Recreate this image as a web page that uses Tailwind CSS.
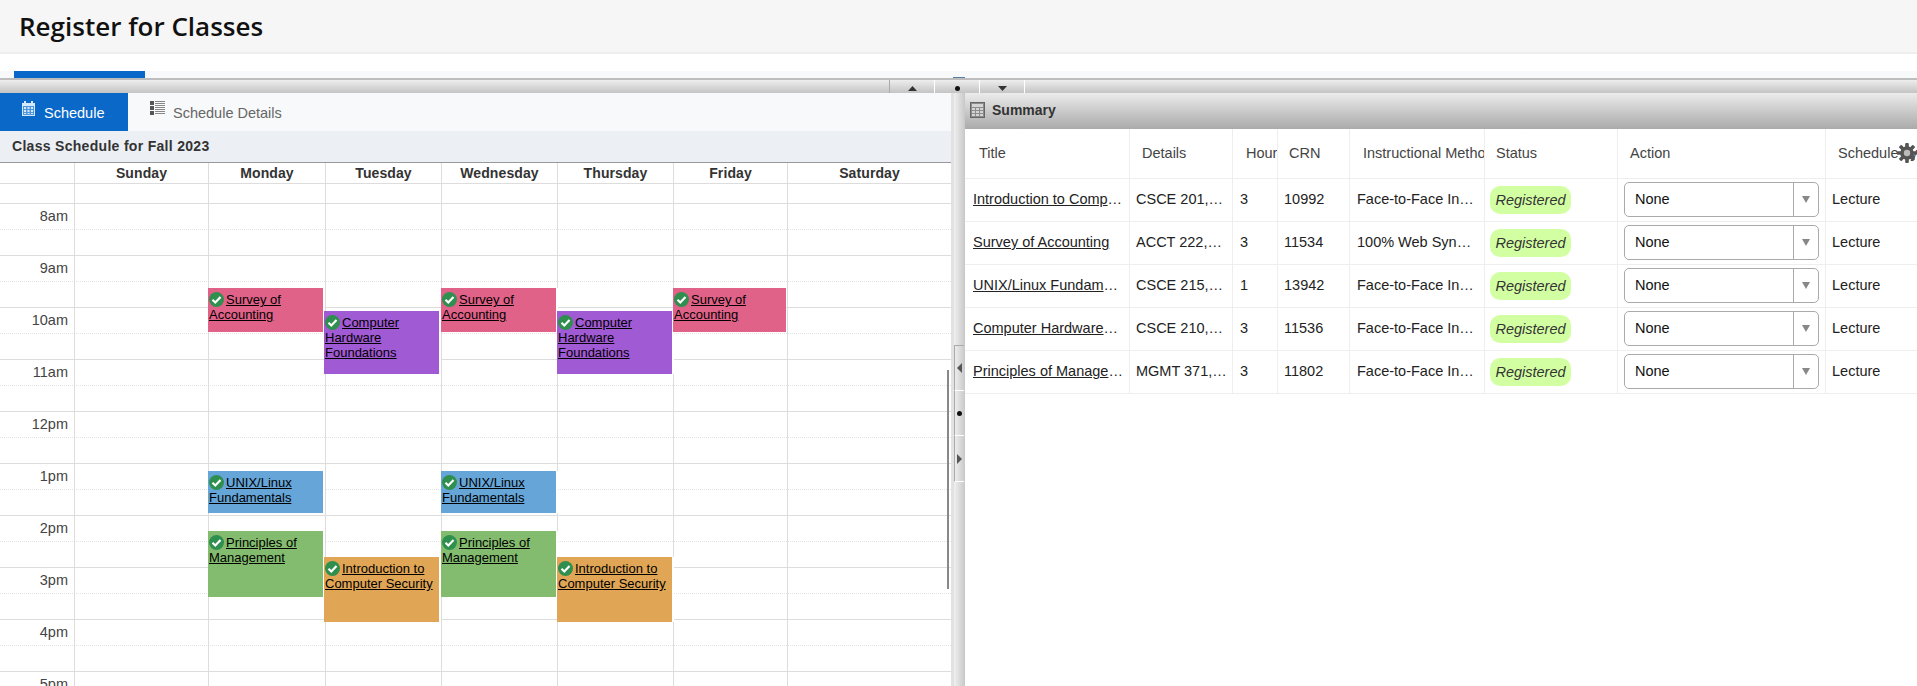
<!DOCTYPE html>
<html lang="en">
<head>
<meta charset="utf-8">
<title>Register for Classes</title>
<script src="https://cdn.jsdelivr.net/npm/@tailwindcss/browser@4"></script>
</head>
<body class="h-[686px] overflow-hidden bg-white font-['Liberation_Sans',Arial,sans-serif] text-[#333]">
<header class="h-[54px] bg-[#f6f6f6] border-b-2 border-[#eeeeee] pl-[19px] flex items-center">
  <h1 class="font-['Open_Sans',sans-serif] font-semibold text-[26px] text-[#111]">Register for Classes</h1>
</header>
<div class="h-[17px] bg-white"></div>
<div class="h-[7px] bg-[#f8f9fb] pl-[14px]"><div class="w-[131px] h-full bg-[#0a68c8]"></div></div>

<div class="relative h-[15px] border-t-2 border-[#bdbdbd] bg-linear-to-b from-[#eeeeee] to-[#c4c4c4] flex pl-[889px]">
  <div class="absolute left-[953px] top-[-3px] w-[12px] h-[1px] bg-[#5b7ea6]"></div>
  <div class="w-[46px] h-[13px] border-l border-l-[#aaaaaa] border-r border-r-white flex items-center justify-center pt-[3px]">
    <svg width="9" height="5" viewBox="0 0 9 5"><path d="M4.500 0L9 5H0z" fill="#333"/></svg>
  </div>
  <div class="w-[45px] h-[13px] border-r border-r-white flex items-center justify-center pt-[3px]">
    <div class="w-[5px] h-[5px] rounded-full bg-[#111]"></div>
  </div>
  <div class="w-[45px] h-[13px] border-r border-r-white flex items-center justify-center pt-[3px]">
    <svg width="9" height="5" viewBox="0 0 9 5"><path d="M0 0H9L4.500 5z" fill="#333"/></svg>
  </div>
</div>

<main class="flex h-[593px]">
  <!-- Left: calendar -->
  <section class="w-[951px] shrink-0 flex flex-col">
    <nav class="h-[38px] bg-[#f8f9fb] flex text-[14.5px] shrink-0">
      <div class="w-[128px] bg-[#0a68c8] text-white flex pl-[22px] gap-[9px]">
        <svg class="mt-[8px]" width="13" height="15" viewBox="0 0 13 15"><path d="M2 0h2v2h5V0h2v2h2v13H0V2h2z" fill="#d6e8fb"/><path d="M1 5h11v9H1z" fill="#4f97dc"/><path d="M2 6h2v2H2zM5.500 6h2v2h-2zM9 6h2v2H9zM2 9h2v2H2zM5.500 9h2v2h-2zM9 9h2v2H9zM2 12h2v1H2zM5.500 12h2v1h-2zM9 12h2v1H9z" fill="#d6e8fb"/></svg>
        <span class="pt-[12px] leading-[17px]">Schedule</span>
      </div>
      <div class="flex pl-[22px] gap-[8px] text-[#666]">
        <svg class="mt-[8px]" width="15" height="14" viewBox="0 0 15 14"><path d="M0 0h4v4H0zM0 5h4v4H0zM0 10h4v4H0z" fill="#555"/><path d="M5 0h10v1H5zM5 2h10v1H5zM5 4h10v1H5zM5 6h10v1H5zM5 8h10v1H5zM5 10h10v1H5zM5 12h10v1H5z" fill="#888"/></svg>
        <span class="pt-[12px] leading-[17px]">Schedule Details</span>
      </div>
    </nav>
    <div class="h-[32px] shrink-0 bg-[#eceff4] border-b border-[#999999] pl-[12px] pt-[6px] text-[14px] font-bold tracking-[0.3px] leading-[18px]">Class Schedule for Fall 2023</div>

    <div class="relative flex-1 overflow-hidden">
      <!-- horizontal rows -->
      <div class="h-[21px] border-b border-[#dddddd]"></div>
      <div class="h-[20px] border-b border-[#dddddd]"></div>
      <div class="h-[52px] border-b border-[#dddddd]"><div class="h-[26px] border-b border-dotted border-[#e4e4e4] w-full"><div class="w-[68px] text-right text-[14.5px] leading-[24px] text-[#444]">8am</div></div></div>
      <div class="h-[52px] border-b border-[#dddddd]"><div class="h-[26px] border-b border-dotted border-[#e4e4e4] w-full"><div class="w-[68px] text-right text-[14.5px] leading-[24px] text-[#444]">9am</div></div></div>
      <div class="h-[52px] border-b border-[#dddddd]"><div class="h-[26px] border-b border-dotted border-[#e4e4e4] w-full"><div class="w-[68px] text-right text-[14.5px] leading-[24px] text-[#444]">10am</div></div></div>
      <div class="h-[52px] border-b border-[#dddddd]"><div class="h-[26px] border-b border-dotted border-[#e4e4e4] w-full"><div class="w-[68px] text-right text-[14.5px] leading-[24px] text-[#444]">11am</div></div></div>
      <div class="h-[52px] border-b border-[#dddddd]"><div class="h-[26px] border-b border-dotted border-[#e4e4e4] w-full"><div class="w-[68px] text-right text-[14.5px] leading-[24px] text-[#444]">12pm</div></div></div>
      <div class="h-[52px] border-b border-[#dddddd]"><div class="h-[26px] border-b border-dotted border-[#e4e4e4] w-full"><div class="w-[68px] text-right text-[14.5px] leading-[24px] text-[#444]">1pm</div></div></div>
      <div class="h-[52px] border-b border-[#dddddd]"><div class="h-[26px] border-b border-dotted border-[#e4e4e4] w-full"><div class="w-[68px] text-right text-[14.5px] leading-[24px] text-[#444]">2pm</div></div></div>
      <div class="h-[52px] border-b border-[#dddddd]"><div class="h-[26px] border-b border-dotted border-[#e4e4e4] w-full"><div class="w-[68px] text-right text-[14.5px] leading-[24px] text-[#444]">3pm</div></div></div>
      <div class="h-[52px] border-b border-[#dddddd]"><div class="h-[26px] border-b border-dotted border-[#e4e4e4] w-full"><div class="w-[68px] text-right text-[14.5px] leading-[24px] text-[#444]">4pm</div></div></div>
      <div class="h-[52px] border-b border-[#dddddd]"><div class="h-[26px] border-b border-dotted border-[#e4e4e4] w-full"><div class="w-[68px] text-right text-[14.5px] leading-[24px] text-[#444]">5pm</div></div></div>

      <!-- day columns over the rows -->
      <div class="absolute inset-0 grid grid-cols-[75px_134px_117px_116px_116px_116px_114px_163px] text-[14px] font-bold leading-[21px] tracking-[0.1px] text-center text-[#333]">
        <div class="border-r border-[#dddddd]"></div>
        <div class="border-r border-[#dddddd]">Sunday</div>
        <div class="relative border-r border-[#dddddd]">Monday
          <div class="absolute left-[-1px] top-[125px] w-[117px] h-[44px] border-r-2 border-white bg-[#e06288] pt-[4px] pl-[1px] text-left font-normal tracking-normal text-[13px] leading-[15px] text-black"><svg class="inline-block align-[-3px] mr-[2px]" width="15" height="15" viewBox="0 0 15 15"><circle cx="7.500" cy="7.500" r="7.500" fill="#2f8f4e"/><path d="M3.500 7.800l2.800 2.700 5.200-5.500" fill="none" stroke="#fff" stroke-width="2.200"/></svg><a class="underline" href="#">Survey of Accounting</a></div>
          <div class="absolute left-[-1px] top-[308px] w-[117px] h-[42px] border-r-2 border-white bg-[#66a5d8] pt-[4px] pl-[1px] text-left font-normal tracking-normal text-[13px] leading-[15px] text-black"><svg class="inline-block align-[-3px] mr-[2px]" width="15" height="15" viewBox="0 0 15 15"><circle cx="7.500" cy="7.500" r="7.500" fill="#2f8f4e"/><path d="M3.500 7.800l2.800 2.700 5.200-5.500" fill="none" stroke="#fff" stroke-width="2.200"/></svg><a class="underline" href="#">UNIX/Linux Fundamentals</a></div>
          <div class="absolute left-[-1px] top-[368px] w-[117px] h-[66px] border-r-2 border-white bg-[#83bc6e] pt-[4px] pl-[1px] text-left font-normal tracking-normal text-[13px] leading-[15px] text-black"><svg class="inline-block align-[-3px] mr-[2px]" width="15" height="15" viewBox="0 0 15 15"><circle cx="7.500" cy="7.500" r="7.500" fill="#2f8f4e"/><path d="M3.500 7.800l2.800 2.700 5.200-5.500" fill="none" stroke="#fff" stroke-width="2.200"/></svg><a class="underline" href="#">Principles of Management</a></div>
        </div>
        <div class="relative border-r border-[#dddddd]">Tuesday
          <div class="absolute left-[-2px] top-[148px] w-[117px] h-[63px] border-r-2 border-white bg-[#a05ad4] pt-[4px] pl-[1px] text-left font-normal tracking-normal text-[13px] leading-[15px] text-black"><svg class="inline-block align-[-3px] mr-[2px]" width="15" height="15" viewBox="0 0 15 15"><circle cx="7.500" cy="7.500" r="7.500" fill="#2f8f4e"/><path d="M3.500 7.800l2.800 2.700 5.200-5.500" fill="none" stroke="#fff" stroke-width="2.200"/></svg><a class="underline" href="#">Computer Hardware Foundations</a></div>
          <div class="absolute left-[-2px] top-[394px] w-[117px] h-[65px] border-r-2 border-white bg-[#e0a655] pt-[4px] pl-[1px] text-left font-normal tracking-normal text-[13px] leading-[15px] text-black"><svg class="inline-block align-[-3px] mr-[2px]" width="15" height="15" viewBox="0 0 15 15"><circle cx="7.500" cy="7.500" r="7.500" fill="#2f8f4e"/><path d="M3.500 7.800l2.800 2.700 5.200-5.500" fill="none" stroke="#fff" stroke-width="2.200"/></svg><a class="underline" href="#">Introduction to Computer Security</a></div>
        </div>
        <div class="relative border-r border-[#dddddd]">Wednesday
          <div class="absolute left-[-1px] top-[125px] w-[117px] h-[44px] border-r-2 border-white bg-[#e06288] pt-[4px] pl-[1px] text-left font-normal tracking-normal text-[13px] leading-[15px] text-black"><svg class="inline-block align-[-3px] mr-[2px]" width="15" height="15" viewBox="0 0 15 15"><circle cx="7.500" cy="7.500" r="7.500" fill="#2f8f4e"/><path d="M3.500 7.800l2.800 2.700 5.200-5.500" fill="none" stroke="#fff" stroke-width="2.200"/></svg><a class="underline" href="#">Survey of Accounting</a></div>
          <div class="absolute left-[-1px] top-[308px] w-[117px] h-[42px] border-r-2 border-white bg-[#66a5d8] pt-[4px] pl-[1px] text-left font-normal tracking-normal text-[13px] leading-[15px] text-black"><svg class="inline-block align-[-3px] mr-[2px]" width="15" height="15" viewBox="0 0 15 15"><circle cx="7.500" cy="7.500" r="7.500" fill="#2f8f4e"/><path d="M3.500 7.800l2.800 2.700 5.200-5.500" fill="none" stroke="#fff" stroke-width="2.200"/></svg><a class="underline" href="#">UNIX/Linux Fundamentals</a></div>
          <div class="absolute left-[-1px] top-[368px] w-[117px] h-[66px] border-r-2 border-white bg-[#83bc6e] pt-[4px] pl-[1px] text-left font-normal tracking-normal text-[13px] leading-[15px] text-black"><svg class="inline-block align-[-3px] mr-[2px]" width="15" height="15" viewBox="0 0 15 15"><circle cx="7.500" cy="7.500" r="7.500" fill="#2f8f4e"/><path d="M3.500 7.800l2.800 2.700 5.200-5.500" fill="none" stroke="#fff" stroke-width="2.200"/></svg><a class="underline" href="#">Principles of Management</a></div>
        </div>
        <div class="relative border-r border-[#dddddd]">Thursday
          <div class="absolute left-[-1px] top-[148px] w-[117px] h-[63px] border-r-2 border-white bg-[#a05ad4] pt-[4px] pl-[1px] text-left font-normal tracking-normal text-[13px] leading-[15px] text-black"><svg class="inline-block align-[-3px] mr-[2px]" width="15" height="15" viewBox="0 0 15 15"><circle cx="7.500" cy="7.500" r="7.500" fill="#2f8f4e"/><path d="M3.500 7.800l2.800 2.700 5.200-5.500" fill="none" stroke="#fff" stroke-width="2.200"/></svg><a class="underline" href="#">Computer Hardware Foundations</a></div>
          <div class="absolute left-[-1px] top-[394px] w-[117px] h-[65px] border-r-2 border-white bg-[#e0a655] pt-[4px] pl-[1px] text-left font-normal tracking-normal text-[13px] leading-[15px] text-black"><svg class="inline-block align-[-3px] mr-[2px]" width="15" height="15" viewBox="0 0 15 15"><circle cx="7.500" cy="7.500" r="7.500" fill="#2f8f4e"/><path d="M3.500 7.800l2.800 2.700 5.200-5.500" fill="none" stroke="#fff" stroke-width="2.200"/></svg><a class="underline" href="#">Introduction to Computer Security</a></div>
        </div>
        <div class="relative border-r border-[#dddddd]">Friday
          <div class="absolute left-[-1px] top-[125px] w-[113px] h-[44px] bg-[#e06288] pt-[4px] pl-[1px] text-left font-normal tracking-normal text-[13px] leading-[15px] text-black"><svg class="inline-block align-[-3px] mr-[2px]" width="15" height="15" viewBox="0 0 15 15"><circle cx="7.500" cy="7.500" r="7.500" fill="#2f8f4e"/><path d="M3.500 7.800l2.800 2.700 5.200-5.500" fill="none" stroke="#fff" stroke-width="2.200"/></svg><a class="underline" href="#">Survey of Accounting</a></div>
        </div>
        <div>Saturday</div>
      </div>
      <!-- scrollbar -->
      <div class="absolute right-[2px] top-[207px] w-[2px] h-[219px] bg-[#888888]"></div>
    </div>
  </section>

  <!-- Splitter -->
  <div class="w-[14px] shrink-0 flex pt-[252px] border-l-[3px] border-[#e2e2e2] bg-linear-to-r from-[#f0f0f0] to-[#c8c8c8]">
    <div class="w-[10px] flex flex-col self-start">
      <div class="h-[46px] border-l border-l-[#aaaaaa] border-t border-t-[#aaaaaa] border-b border-b-white flex items-center justify-center">
        <svg width="5" height="10" viewBox="0 0 5 10"><path d="M5 0V10L0 5z" fill="#555"/></svg>
      </div>
      <div class="h-[45px] border-l border-l-[#aaaaaa] border-b border-b-white flex items-center justify-center">
        <div class="w-[5px] h-[5px] rounded-full bg-[#111]"></div>
      </div>
      <div class="h-[46px] border-l border-l-[#aaaaaa] border-b border-b-white flex items-center justify-center">
        <svg width="5" height="10" viewBox="0 0 5 10"><path d="M0 0V10L5 5z" fill="#555"/></svg>
      </div>
    </div>
  </div>

  <!-- Right: summary -->
  <section class="flex-1 min-w-0 flex flex-col text-[14.5px]">
    <div class="h-[36px] shrink-0 bg-linear-to-b from-[#ececec] to-[#aaaaab] flex items-center pl-[5px] pb-[2px] gap-[7px] text-[14px] font-bold text-[#333]">
      <svg width="15" height="16" viewBox="0 0 15 16"><rect x="0.500" y="0.500" width="14" height="15" fill="#8c8c8c" stroke="#666"/><path d="M2 2h11v3H2z" fill="#d4d4d4"/><path d="M2 6h3v2H2zM6 6h3v2H6zM10 6h3v2h-3zM2 9h3v2H2zM6 9h3v2H6zM10 9h3v2h-3zM2 12h3v2H2zM6 12h3v2H6zM10 12h3v2h-3z" fill="#d4d4d4"/></svg>
      <span>Summary</span>
    </div>

    <div class="relative">
      <div class="grid grid-cols-[165px_103px_45px_72px_135px_133px_208px_91px] h-[50px] border-b border-[#eeeeee] items-stretch leading-[49px] text-[#444]">
        <div class="border-r border-[#eeeeee] pl-[14px] overflow-hidden whitespace-nowrap">Title</div>
        <div class="border-r border-[#eeeeee] pl-[12px] overflow-hidden whitespace-nowrap">Details</div>
        <div class="border-r border-[#eeeeee] pl-[13px] overflow-hidden whitespace-nowrap">Hours</div>
        <div class="border-r border-[#eeeeee] pl-[11px] overflow-hidden whitespace-nowrap">CRN</div>
        <div class="border-r border-[#eeeeee] pl-[13px] overflow-hidden whitespace-nowrap">Instructional Method</div>
        <div class="border-r border-[#eeeeee] pl-[11px] overflow-hidden whitespace-nowrap">Status</div>
        <div class="border-r border-[#eeeeee] pl-[12px] overflow-hidden whitespace-nowrap">Action</div>
        <div class="pl-[12px] overflow-hidden whitespace-nowrap">Schedule Type</div>
      </div>

      <div class="grid grid-cols-[165px_103px_45px_72px_135px_133px_208px_91px] h-[43px] border-b border-[#eeeeee] leading-[41px] text-[#222]">
        <div class="border-r border-[#eeeeee] pl-[8px] pr-[3px] truncate"><a class="underline" href="#">Introduction to Computer Security</a></div>
        <div class="border-r border-[#eeeeee] pl-[6px] pr-[8px] truncate">CSCE 201, 500</div>
        <div class="border-r border-[#eeeeee] pl-[7px]">3</div>
        <div class="border-r border-[#eeeeee] pl-[6px]">10992</div>
        <div class="border-r border-[#eeeeee] pl-[7px] pr-[8px] truncate">Face-to-Face Instruction</div>
        <div class="border-r border-[#eeeeee] pl-[5px] flex items-center"><span class="h-[28px] w-[81px] rounded-[10px] bg-[#d3ffa3] text-center leading-[28px] italic text-[#333]">Registered</span></div>
        <div class="border-r border-[#eeeeee] pl-[6px] pb-[1px] flex items-center">
          <div class="w-[195px] h-[35px] rounded-[5px] border border-[#aaaaaa] flex leading-[33px]"><span class="flex-1 pl-[10px] text-[#111]">None</span><span class="w-[25px] border-l border-[#aaaaaa] flex items-center justify-center"><svg width="8" height="7" viewBox="0 0 8 7"><path d="M0 0H8L4 7z" fill="#888"/></svg></span></div>
        </div>
        <div class="pl-[6px]">Lecture</div>
      </div>

      <div class="grid grid-cols-[165px_103px_45px_72px_135px_133px_208px_91px] h-[43px] border-b border-[#eeeeee] leading-[41px] text-[#222]">
        <div class="border-r border-[#eeeeee] pl-[8px] pr-[7px] truncate"><a class="underline" href="#">Survey of Accounting</a></div>
        <div class="border-r border-[#eeeeee] pl-[6px] pr-[8px] truncate">ACCT 222, 700</div>
        <div class="border-r border-[#eeeeee] pl-[7px]">3</div>
        <div class="border-r border-[#eeeeee] pl-[6px]">11534</div>
        <div class="border-r border-[#eeeeee] pl-[7px] pr-[11px] truncate">100% Web Synchronous</div>
        <div class="border-r border-[#eeeeee] pl-[5px] flex items-center"><span class="h-[28px] w-[81px] rounded-[10px] bg-[#d3ffa3] text-center leading-[28px] italic text-[#333]">Registered</span></div>
        <div class="border-r border-[#eeeeee] pl-[6px] pb-[1px] flex items-center">
          <div class="w-[195px] h-[35px] rounded-[5px] border border-[#aaaaaa] flex leading-[33px]"><span class="flex-1 pl-[10px] text-[#111]">None</span><span class="w-[25px] border-l border-[#aaaaaa] flex items-center justify-center"><svg width="8" height="7" viewBox="0 0 8 7"><path d="M0 0H8L4 7z" fill="#888"/></svg></span></div>
        </div>
        <div class="pl-[6px]">Lecture</div>
      </div>

      <div class="grid grid-cols-[165px_103px_45px_72px_135px_133px_208px_91px] h-[43px] border-b border-[#eeeeee] leading-[41px] text-[#222]">
        <div class="border-r border-[#eeeeee] pl-[8px] pr-[7px] truncate"><a class="underline" href="#">UNIX/Linux Fundamentals</a></div>
        <div class="border-r border-[#eeeeee] pl-[6px] pr-[8px] truncate">CSCE 215, 500</div>
        <div class="border-r border-[#eeeeee] pl-[7px]">1</div>
        <div class="border-r border-[#eeeeee] pl-[6px]">13942</div>
        <div class="border-r border-[#eeeeee] pl-[7px] pr-[8px] truncate">Face-to-Face Instruction</div>
        <div class="border-r border-[#eeeeee] pl-[5px] flex items-center"><span class="h-[28px] w-[81px] rounded-[10px] bg-[#d3ffa3] text-center leading-[28px] italic text-[#333]">Registered</span></div>
        <div class="border-r border-[#eeeeee] pl-[6px] pb-[1px] flex items-center">
          <div class="w-[195px] h-[35px] rounded-[5px] border border-[#aaaaaa] flex leading-[33px]"><span class="flex-1 pl-[10px] text-[#111]">None</span><span class="w-[25px] border-l border-[#aaaaaa] flex items-center justify-center"><svg width="8" height="7" viewBox="0 0 8 7"><path d="M0 0H8L4 7z" fill="#888"/></svg></span></div>
        </div>
        <div class="pl-[6px]">Lecture</div>
      </div>

      <div class="grid grid-cols-[165px_103px_45px_72px_135px_133px_208px_91px] h-[43px] border-b border-[#eeeeee] leading-[41px] text-[#222]">
        <div class="border-r border-[#eeeeee] pl-[8px] pr-[7px] truncate"><a class="underline" href="#">Computer Hardware Foundations</a></div>
        <div class="border-r border-[#eeeeee] pl-[6px] pr-[8px] truncate">CSCE 210, 500</div>
        <div class="border-r border-[#eeeeee] pl-[7px]">3</div>
        <div class="border-r border-[#eeeeee] pl-[6px]">11536</div>
        <div class="border-r border-[#eeeeee] pl-[7px] pr-[8px] truncate">Face-to-Face Instruction</div>
        <div class="border-r border-[#eeeeee] pl-[5px] flex items-center"><span class="h-[28px] w-[81px] rounded-[10px] bg-[#d3ffa3] text-center leading-[28px] italic text-[#333]">Registered</span></div>
        <div class="border-r border-[#eeeeee] pl-[6px] pb-[1px] flex items-center">
          <div class="w-[195px] h-[35px] rounded-[5px] border border-[#aaaaaa] flex leading-[33px]"><span class="flex-1 pl-[10px] text-[#111]">None</span><span class="w-[25px] border-l border-[#aaaaaa] flex items-center justify-center"><svg width="8" height="7" viewBox="0 0 8 7"><path d="M0 0H8L4 7z" fill="#888"/></svg></span></div>
        </div>
        <div class="pl-[6px]">Lecture</div>
      </div>

      <div class="grid grid-cols-[165px_103px_45px_72px_135px_133px_208px_91px] h-[43px] border-b border-[#eeeeee] leading-[41px] text-[#222]">
        <div class="border-r border-[#eeeeee] pl-[8px] pr-[3px] truncate"><a class="underline" href="#">Principles of Management</a></div>
        <div class="border-r border-[#eeeeee] pl-[6px] pr-[4px] truncate">MGMT 371, 500</div>
        <div class="border-r border-[#eeeeee] pl-[7px]">3</div>
        <div class="border-r border-[#eeeeee] pl-[6px]">11802</div>
        <div class="border-r border-[#eeeeee] pl-[7px] pr-[8px] truncate">Face-to-Face Instruction</div>
        <div class="border-r border-[#eeeeee] pl-[5px] flex items-center"><span class="h-[28px] w-[81px] rounded-[10px] bg-[#d3ffa3] text-center leading-[28px] italic text-[#333]">Registered</span></div>
        <div class="border-r border-[#eeeeee] pl-[6px] pb-[1px] flex items-center">
          <div class="w-[195px] h-[35px] rounded-[5px] border border-[#aaaaaa] flex leading-[33px]"><span class="flex-1 pl-[10px] text-[#111]">None</span><span class="w-[25px] border-l border-[#aaaaaa] flex items-center justify-center"><svg width="8" height="7" viewBox="0 0 8 7"><path d="M0 0H8L4 7z" fill="#888"/></svg></span></div>
        </div>
        <div class="pl-[6px]">Lecture</div>
      </div>

      <!-- settings gear over the header -->
      <svg class="absolute left-[932px] top-[14px]" width="20" height="20" viewBox="0 0 22 22">
        <g fill="#555">
          <rect x="9" y="0" width="4" height="22" rx="1"/>
          <rect x="9" y="0" width="4" height="22" rx="1" transform="rotate(45 11 11)"/>
          <rect x="9" y="0" width="4" height="22" rx="1" transform="rotate(90 11 11)"/>
          <rect x="9" y="0" width="4" height="22" rx="1" transform="rotate(135 11 11)"/>
        </g>
        <circle cx="11" cy="11" r="5.500" fill="none" stroke="#555" stroke-width="4"/>
        <circle cx="11" cy="11" r="3.500" fill="#bbbbbb"/>
      </svg>
    </div>
  </section>
</main>
</body>
</html>
